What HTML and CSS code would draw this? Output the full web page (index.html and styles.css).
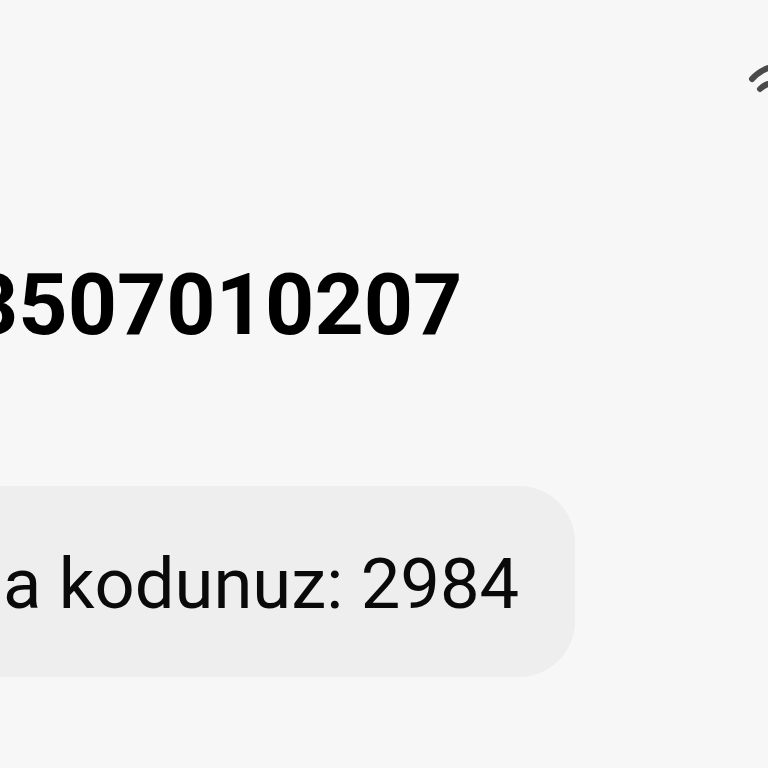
FILE: index.html
```html
<!DOCTYPE html>
<html lang="tr">
<head>
<meta charset="utf-8">
<link rel="stylesheet" href="styles.css">
</head>
<body>
<div class="screen">
  <div class="topbar">
    <svg class="icon" width="20" height="40" viewBox="0 0 20 40">
      <path d="M4 24 Q10 17 20 13" fill="none" stroke="#4a4a4a" stroke-width="6" stroke-linecap="round"/>
      <path d="M12 34 Q16 30 20 29" fill="none" stroke="#4a4a4a" stroke-width="6" stroke-linecap="round"/>
    </svg>
  </div>
  <div class="sender">3507010207</div>
  <div class="bubble">a kodunuz: 2984</div>
</div>
</body>
</html>
```
FILE: styles.css
```css
html, body {
  margin: 0;
  padding: 0;
  background: #f7f7f7;
  overflow: hidden;
}
.screen {
  width: 768px;
  height: 768px;
  overflow: hidden;
  font-family: Roboto, "Noto Sans", sans-serif;
  color: #000;
}
.topbar {
  height: 255px;
  display: flex;
  justify-content: flex-end;
  align-items: flex-start;
}
.icon {
  margin-top: 55px;
  margin-right: 0;
  flex: none;
}
.sender {
  font-size: 86px;
  font-weight: 700;
  line-height: 100px;
  height: 100px;
  margin-left: -31px;
  white-space: nowrap;
}
.bubble {
  box-sizing: border-box;
  margin-top: 131px;
  margin-left: -60px;
  width: 635px;
  height: 191px;
  padding: 58px 0 0 63px;
  background: #eeeeee;
  border-radius: 56px;
  font-size: 70.5px;
  line-height: 80px;
  white-space: nowrap;
  color: #0a0a0a;
}
```
